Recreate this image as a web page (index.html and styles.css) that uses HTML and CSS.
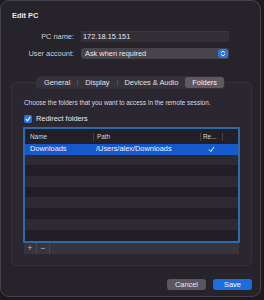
FILE: index.html
```html
<!DOCTYPE html>
<html>
<head>
<meta charset="utf-8">
<link rel="stylesheet" href="styles.css">
</head>
<body>
<div class="window">
  <h1 class="title">Edit PC</h1>
  <div class="form">
    <span class="lbl">PC name:</span>
    <div class="field">172.18.15.151</div>
    <span class="lbl">User account:</span>
    <div class="popup">
      <span>Ask when required</span>
      <span class="stepper"><svg width="10" height="9" viewBox="0 0 10 9"><rect width="10" height="9" rx="2.2" fill="#2a72e0"/><path d="M3.2 3.6 L5 2 L6.8 3.6 M3.2 5.4 L5 7 L6.8 5.4" fill="none" stroke="#fff" stroke-width="1" stroke-linecap="round" stroke-linejoin="round"/></svg></span>
    </div>
  </div>
  <div class="tabs">
    <div class="seg">
      <span class="seg-item">General</span>
      <span class="seg-sep"></span>
      <span class="seg-item">Display</span>
      <span class="seg-sep"></span>
      <span class="seg-item">Devices &amp; Audio</span>
      <span class="seg-item active">Folders</span>
    </div>
    <div class="box">
      <p class="desc">Choose the folders that you want to access in the remote session.</p>
      <div class="check">
        <span class="cb"><svg width="8" height="8" viewBox="0 0 8 8"><rect width="8" height="8" rx="1.8" fill="#2a72e0"/><path d="M2 4.2 L3.4 5.8 L6.1 2.2" fill="none" stroke="#fff" stroke-width="1.1" stroke-linecap="round" stroke-linejoin="round"/></svg></span>
        <span>Redirect folders</span>
      </div>
      <div class="table">
        <div class="thead">
          <div class="th c1">Name</div>
          <div class="th c2">Path</div>
          <div class="th c3">Re...</div>
          <div class="th c4"></div>
        </div>
        <div class="tbody">
          <div class="tr sel">
            <div class="td c1">Downloads</div>
            <div class="td c2">/Users/alex/Downloads</div>
            <div class="td c3"><svg width="7" height="7" viewBox="0 0 7 7"><path d="M1.2 3.8 L2.8 5.6 L5.8 1.2" fill="none" stroke="#fff" stroke-width="1" stroke-linecap="round" stroke-linejoin="round"/></svg></div>
            <div class="td c4"></div>
          </div>
          <div class="tr alt"></div>
          <div class="tr"></div>
          <div class="tr alt"></div>
          <div class="tr"></div>
          <div class="tr alt"></div>
          <div class="tr"></div>
          <div class="tr alt"></div>
          <div class="tr"></div>
        </div>
      </div>
      <div class="bar">
        <span class="bb">+</span>
        <span class="bb">&#8722;</span>
      </div>
    </div>
  </div>
  <div class="actions">
    <button class="btn">Cancel</button>
    <button class="btn primary">Save</button>
  </div>
</div>
</body>
</html>
```

FILE: styles.css
```css
* { box-sizing: border-box; }
html, body {
  margin: 0;
  padding: 0;
  background: #1c1a1f;
  font-family: "Liberation Sans", Arial, sans-serif;
  color: #e4e0e8;
}
.window {
  width: 261px;
  height: 297px;
  border: 1px solid #46424b;
  border-radius: 9px;
  background: #27232b;
  padding-top: 10px;
  display: flex;
  flex-direction: column;
  overflow: hidden;
}
.title {
  margin: 0 0 0 11px;
  font-size: 7.4px;
  font-weight: bold;
  line-height: 10px;
  color: #ece8f0;
}
.form {
  margin-top: 10px;
  display: grid;
  grid-template-columns: 73px 148px;
  column-gap: 7px;
  row-gap: 6px;
  align-items: center;
}
.lbl {
  text-align: right;
  font-size: 7.4px;
  line-height: 11px;
  color: #d2ced6;
}
.field {
  height: 11px;
  background: #332f37;
  border-top: 1px solid #3b373f;
  font-size: 7.4px;
  line-height: 10px;
  padding-left: 2px;
  color: #ece8f0;
}
.popup {
  height: 11px;
  background: #47434b;
  border-radius: 3px;
  display: flex;
  align-items: center;
  justify-content: space-between;
  padding: 0 1px 0 4px;
  font-size: 7.4px;
  line-height: 11px;
  color: #ece8f0;
}
.stepper { display: flex; }
.tabs {
  margin-top: 18px;
  display: flex;
  flex-direction: column;
  align-items: center;
}
.seg {
  position: relative;
  z-index: 1;
  display: flex;
  align-items: center;
  height: 11px;
  background: #36323a;
  border-radius: 3px;
  box-shadow: 0 0 0 0.5px #403c45;
}
.seg-item {
  font-size: 7.4px;
  line-height: 11px;
  padding: 0 7px;
  color: #e4e0e8;
}
.seg-item.active {
  background: #5d5961;
  border-radius: 3px;
  color: #f2eef6;
}
.seg-sep {
  width: 1px;
  height: 6px;
  background: #514d56;
}
.box {
  margin-top: -6px;
  align-self: stretch;
  margin-left: 10px;
  margin-right: 8px;
  background: #2b2730;
  border: 1px solid #353139;
  border-radius: 5px;
  padding: 16px 11px 11px 11px;
  display: flex;
  flex-direction: column;
}
.desc {
  margin: 0 0 0 1px;
  font-size: 6.4px;
  line-height: 8px;
  color: #dcd8e0;
}
.check {
  margin-top: 7px;
  margin-left: 1px;
  display: flex;
  align-items: center;
  gap: 4px;
  height: 9px;
  font-size: 7.4px;
  color: #ece8f0;
}
.cb { display: flex; }
.table {
  margin-top: 4px;
  height: 116px;
  border: 2px solid #2d6aac;
  border-radius: 1px;
  background: #211e25;
  display: flex;
  flex-direction: column;
  overflow: hidden;
}
.thead, .tr {
  display: grid;
  grid-template-columns: 68px 107px 22px 1fr;
}
.thead {
  height: 15px;
  background: #221f26;
  align-items: center;
}
.th {
  font-size: 6.4px;
  line-height: 8px;
  color: #d6d2da;
  padding-left: 5px;
}
.th.c2, .th.c3, .th.c4 {
  border-left: 1px solid #46424b;
}
.th.c2 { padding-left: 3px; }
.th.c3 { padding-left: 2px; }
.th.c4 { height: 8px; }
.tbody { flex: 1; overflow: hidden; }
.tr {
  height: 10.7px;
  background: #211e25;
  align-items: center;
}
.tr.alt { background: #2d2a31; }
.tr.sel { background: #1559cc; }
.td {
  font-size: 7.4px;
  line-height: 10px;
  color: #f4f2f8;
  padding-left: 5px;
  white-space: nowrap;
}
.td.c2 { padding-left: 3px; }
.td.c3 { padding-left: 8px; display: flex; }
.bar {
  margin: 0 1px;
  height: 11px;
  background: #37343b;
  display: flex;
}
.bb {
  width: 13px;
  border-right: 1px solid #4a464f;
  text-align: center;
  font-size: 9px;
  line-height: 11px;
  color: #bdb9c1;
}
.actions {
  margin-top: 13px;
  display: flex;
  justify-content: flex-end;
  gap: 7px;
  padding-right: 8px;
}
.btn {
  width: 39px;
  height: 11px;
  border: none;
  border-radius: 3px;
  padding: 0;
  font-family: "Liberation Sans", Arial, sans-serif;
  font-size: 7.4px;
  line-height: 11px;
  color: #ece8f0;
  background: #5a565e;
}
.btn.primary {
  background: #1c6ee0;
  color: #ffffff;
}
```
